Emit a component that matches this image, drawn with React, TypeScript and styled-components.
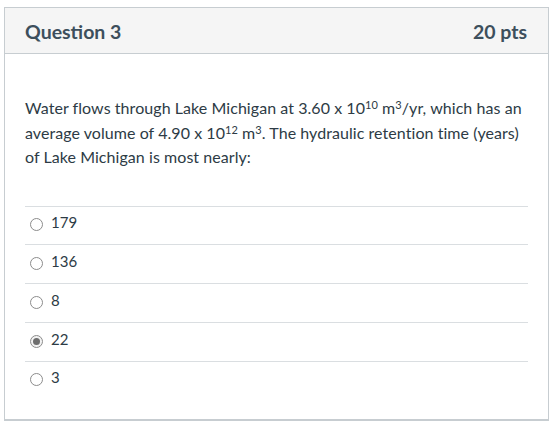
import React from 'react'
import styled, { createGlobalStyle } from 'styled-components'

const GlobalStyle = createGlobalStyle`
  body {
    margin: 0;
    background: #ffffff;
    font-family: Lato, "Open Sans", sans-serif;
    color: #2d3b45;
  }
`

const Page = styled.div`
  padding: 7px 5px 0 4px;
`

const QuestionCard = styled.div`
  border: 1px solid #c7cdd1;
  border-bottom-width: 2px;
  background: #ffffff;
  height: 414px;
  box-sizing: border-box;
`

const Header = styled.div`
  display: flex;
  align-items: center;
  justify-content: space-between;
  height: 46px;
  box-sizing: border-box;
  padding: 0 21px 0 20px;
  background: #f5f5f5;
  border-bottom: 1px solid #c7cdd1;
`

const HeaderText = styled.span`
  font-size: 19.5px;
  font-weight: 700;
  color: #3d4f5c;
  padding-top: 1px;
`

const Body = styled.div`
  padding: 42px 20px 0 20px;
`

const QuestionText = styled.p`
  margin: 0 0 36px 0;
  font-size: 16px;
  line-height: 24.5px;
  letter-spacing: 0.06px;
`

const Sup = styled.sup`
  font-size: 11px;
  line-height: 11px;
  vertical-align: 5px;
`

const AnswerList = styled.div`
  display: flex;
  flex-direction: column;
`

const AnswerRow = styled.label`
  display: flex;
  align-items: center;
  height: 37.75px;
  box-sizing: content-box;
  border-top: 1px solid #dadee1;
  padding-left: 5px;
  font-size: 15px;
`

const Radio = styled.span<{ checked?: boolean }>`
  position: relative;
  width: 11px;
  height: 11px;
  border-radius: 50%;
  border: 1px solid #8c8c8c;
  background: ${({ checked }) => (checked ? '#f2f2f2' : '#ffffff')};
  margin-right: 8px;
  margin-bottom: 1px;
  flex-shrink: 0;

  &::after {
    content: "";
    display: ${({ checked }) => (checked ? 'block' : 'none')};
    position: absolute;
    left: 2px;
    top: 2px;
    width: 7px;
    height: 7px;
    border-radius: 50%;
    background: #6e6e6e;
  }
`

const AnswerLabel = styled.span`
  color: #2d3b45;
  margin-bottom: 6px;
`

const ANSWERS = [
  { text: '179', checked: false },
  { text: '136', checked: false },
  { text: '8', checked: false },
  { text: '22', checked: true },
  { text: '3', checked: false },
]

export default function App() {
  return (
    <Page>
      <GlobalStyle />
      <QuestionCard>
        <Header>
          <HeaderText>Question 3</HeaderText>
          <HeaderText>20 pts</HeaderText>
        </Header>
        <Body>
          <QuestionText>
            Water flows through Lake Michigan at 3.60 x 10<Sup>10</Sup> m<Sup>3</Sup>/yr, which has an
            average volume of 4.90 x 10<Sup>12</Sup> m<Sup>3</Sup>. The hydraulic retention time (years)
            of Lake Michigan is most nearly:
          </QuestionText>
          <AnswerList>
            {ANSWERS.map((a) => (
              <AnswerRow key={a.text}>
                <Radio checked={a.checked} />
                <AnswerLabel>{a.text}</AnswerLabel>
              </AnswerRow>
            ))}
          </AnswerList>
        </Body>
      </QuestionCard>
    </Page>
  )
}
